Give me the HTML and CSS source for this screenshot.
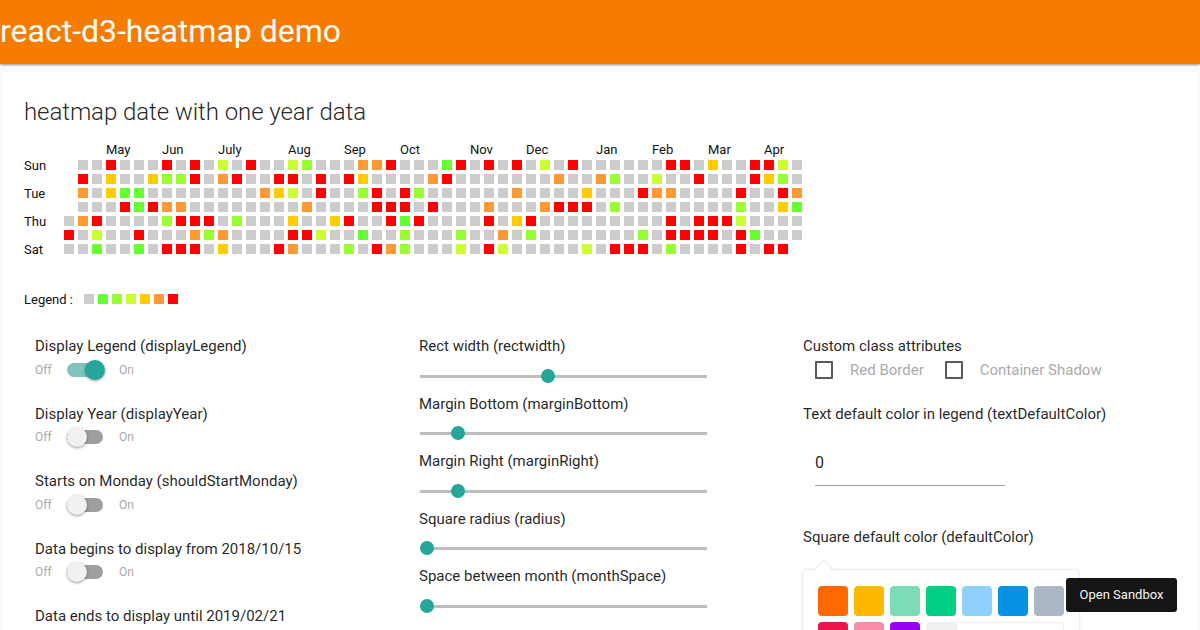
FILE: index.html
```html
<!DOCTYPE html>
<html lang="en">
<head>
<meta charset="utf-8">
<title>react-d3-heatmap demo</title>
<link rel="stylesheet" href="styles.css">
</head>
<body>
<header class="appbar"><h1 class="appbar-title">react-d3-heatmap demo</h1></header>
<main class="paper">
  <h2 class="page-title">heatmap date with one year data</h2>
  <section class="heatmap">
    <div class="months">
      <span class="m4">May</span><span class="m4">Jun</span><span class="m5">July</span><span class="m4">Aug</span><span class="m4">Sep</span><span class="m5">Oct</span><span class="m4">Nov</span><span class="m5">Dec</span><span class="m4">Jan</span><span class="m4">Feb</span><span class="m4">Mar</span><span class="m4">Apr</span>
    </div>
    <div class="map-body">
      <div class="days"><span>Sun</span><span></span><span>Tue</span><span></span><span>Thu</span><span></span><span>Sat</span></div>
      <div class="cells" id="cells"></div>
    </div>
  </section>
  <div class="legend">
    <span class="legend-label">Legend :</span>
    <div class="legend-cells"><i class="c c0"></i><i class="c c1"></i><i class="c c2"></i><i class="c c3"></i><i class="c c4"></i><i class="c c5"></i><i class="c c6"></i></div>
  </div>
  <div class="controls">
    <div class="col col-switches">
      <div class="field"><div class="label">Display Legend (displayLegend)</div><div class="switch-row"><span>Off</span><b class="switch on"></b><span>On</span></div></div>
      <div class="field"><div class="label">Display Year (displayYear)</div><div class="switch-row"><span>Off</span><b class="switch"></b><span>On</span></div></div>
      <div class="field"><div class="label">Starts on Monday (shouldStartMonday)</div><div class="switch-row"><span>Off</span><b class="switch"></b><span>On</span></div></div>
      <div class="field"><div class="label">Data begins to display from 2018/10/15</div><div class="switch-row"><span>Off</span><b class="switch"></b><span>On</span></div></div>
      <div class="field"><div class="label">Data ends to display until 2019/02/21</div></div>
    </div>
    <div class="col col-sliders">
      <div class="slider"><div class="label">Rect width (rectwidth)</div><div class="track"><b class="thumb" style="left:42.2%"></b></div></div>
      <div class="slider"><div class="label">Margin Bottom (marginBottom)</div><div class="track"><b class="thumb" style="left:10.8%"></b></div></div>
      <div class="slider"><div class="label">Margin Right (marginRight)</div><div class="track"><b class="thumb" style="left:10.8%"></b></div></div>
      <div class="slider"><div class="label">Square radius (radius)</div><div class="track"><b class="thumb" style="left:0"></b></div></div>
      <div class="slider"><div class="label">Space between month (monthSpace)</div><div class="track"><b class="thumb" style="left:0"></b></div></div>
    </div>
    <div class="col col-misc">
      <div class="label">Custom class attributes</div>
      <div class="checks">
        <span class="box"></span><span class="check-text">Red Border</span>
        <span class="box"></span><span class="check-text">Container Shadow</span>
      </div>
      <div class="label text-color-label">Text default color in legend (textDefaultColor)</div>
      <div class="text-input">0</div>
      <div class="label square-label">Square default color (defaultColor)</div>
      <div class="picker">
        <div class="swatches">
          <i class="sw s1"></i><i class="sw s2"></i><i class="sw s3"></i><i class="sw s4"></i><i class="sw s5"></i><i class="sw s6"></i><i class="sw s7"></i>
          <i class="sw s8"></i><i class="sw s9"></i><i class="sw s10"></i>
          <div class="hex"><span class="hash"></span><span class="hex-val"></span></div>
        </div>
      </div>
    </div>
  </div>
</main>
<div class="sandbox-tip">Open Sandbox</div>
<script src="script.js"></script>
</body>
</html>
```
FILE: styles.css
```css
* { box-sizing: border-box; }
html, body { margin: 0; padding: 0; height: 630px; overflow: hidden; }
body { background: #fafafa; font-family: Roboto, "Liberation Sans", sans-serif; color: rgba(0,0,0,.87); }
.appbar { height: 64px; background: #f57c00; box-shadow: 0 1px 2px rgba(0,0,0,.4); position: relative; z-index: 2; }
.appbar-title { margin: 0; font-size: 32px; font-weight: 400; line-height: 63px; color: #fff; white-space: nowrap; }
.paper { margin: 8px 2px 0; height: 558px; background: #fff; padding: 24px 22px 0; overflow: hidden; }
.page-title { margin: 0; font-size: 24px; font-weight: 300; line-height: 32px; height: 32px; letter-spacing: -0.07px; color: rgba(0,0,0,.87); }
.heatmap { margin-top: 16px; font-size: 13px; line-height: 12px; }
.months { display: flex; height: 16px; padding-left: 82px; color: #111; }
.months span { flex: none; }
.m4 { width: 56px; }
.m5 { width: 70px; }
.map-body { display: flex; }
.days { width: 40px; display: grid; grid-template-rows: repeat(7, 14px); color: #111; }
.days span { line-height: 14px; transform: translateY(-1px); }
.cells { display: grid; grid-template-columns: repeat(53, 10px); grid-template-rows: repeat(7, 10px); gap: 4px; }
.c { display: block; width: 10px; height: 10px; }
.ce { background: transparent; }
.c0 { background: #ccc; }
.c1 { background: #66ff33; }
.c2 { background: #99ff33; }
.c3 { background: #ccff33; }
.c4 { background: #ffcc00; }
.c5 { background: #ff9933; }
.c6 { background: #ff0000; }
.legend { display: flex; align-items: center; margin-top: 34px; font-size: 13px; height: 14px; color: #111; }
.legend-label { width: 60px; }
.legend-cells { display: flex; gap: 4px; }
.controls { display: grid; grid-template-columns: repeat(3, 384px); margin-top: 30px; padding-left: 11px; }
.label { font-size: 15px; line-height: 20px; white-space: nowrap; }
.field { height: 67.6px; }
.switch-row { display: flex; align-items: center; height: 24px; margin-top: 1.6px; font-size: 12px; color: #aaa; }
.switch-row span:first-child { width: 32px; }
.switch { display: block; width: 36px; height: 14px; border-radius: 7px; background: #9e9e9e; position: relative; margin-right: 16px; }
.switch::after { content: ""; position: absolute; left: 0; top: -3px; width: 20px; height: 20px; border-radius: 50%; background: #f1f1f1; box-shadow: 0 1px 3px rgba(0,0,0,.4); }
.switch.on { background: #80c4be; }
.switch.on::after { left: 18px; background: #26a69a; }
.slider { height: 57.5px; }
.track { position: relative; width: 287px; height: 3px; margin: 18.5px 0 0 1px; background: #bdbdbd; }
.thumb { position: absolute; top: -6px; width: 14px; height: 14px; border-radius: 50%; background: #26a69a; }
.checks { display: flex; align-items: center; height: 24px; margin-top: 2px; padding-left: 12px; font-size: 15px; color: #aaa; }
.box { width: 18px; height: 18px; border: 2px solid #5a5a5a; border-radius: 1px; margin-right: 17px; flex: none; }
.check-text { margin-right: 21px; white-space: nowrap; }
.text-color-label { margin-top: 22px; }
.text-input { width: 190px; height: 36px; margin: 26px 0 0 12px; border-bottom: 1px solid #9e9e9e; font-size: 16px; line-height: 26px; }
.square-label { margin-top: 41px; }
.picker { position: relative; width: 276px; height: 120px; margin-top: 23px; background: #fff; border-radius: 4px; box-shadow: 0 0 3px rgba(0,0,0,.2); padding: 16px 15px; }
.picker::before { content: ""; position: absolute; left: 14px; top: -6px; width: 13px; height: 13px; background: #fff; transform: rotate(45deg); box-shadow: -1px -1px 2px rgba(0,0,0,.1); }
.swatches { display: flex; flex-wrap: wrap; gap: 6px; position: relative; }
.sw { display: block; width: 30px; height: 30px; border-radius: 4px; }
.s1 { background: #ff6900; } .s2 { background: #fcb900; } .s3 { background: #7bdcb5; } .s4 { background: #00d084; } .s5 { background: #8ed1fc; }
.s6 { background: #0693e3; } .s7 { background: #abb8c3; } .s8 { background: #eb144c; } .s9 { background: #f78da7; } .s10 { background: #9900ef; }
.hex { display: flex; width: 138px; height: 30px; border-radius: 4px; box-shadow: inset 0 0 0 1px #eee; overflow: hidden; }
.hash { width: 31px; background: #f0f0f1; }
.hex-val { flex: 1; }
.sandbox-tip { position: absolute; left: 1066px; top: 578px; width: 111px; height: 34px; background: #151515; border-radius: 3px; color: #f5f5f5; font-size: 13px; line-height: 34px; text-align: center; z-index: 5; }
```
FILE: script.js
```js
var rows = [
  "e006000606" + "0306003200" + "0556000160" + "6060306000" + "0006604006" + "630",
  "e604004226" + "0560066060" + "6400005600" + "0000050052" + "0030060006" + "420",
  "e504110000" + "0000543060" + "0260620000" + "0050000400" + "0655000060" + "065",
  "e000616550" + "0000000500" + "0066606000" + "5000566602" + "0000000020" + "041",
  "0560000266" + "6020004004" + "6006160000" + "6046000000" + "0006066630" + "000",
  "6030060005" + "2500006630" + "0100200020" + "0502000000" + "0206666061" + "000",
  "0010010666" + "0400065000" + "2065200030" + "6300000306" + "6602000060" + "66e"
];
var grid = document.getElementById("cells");
rows.forEach(function (row) {
  row.split("").forEach(function (level) {
    var cell = document.createElement("i");
    cell.className = "c c" + level;
    grid.appendChild(cell);
  });
});
```
